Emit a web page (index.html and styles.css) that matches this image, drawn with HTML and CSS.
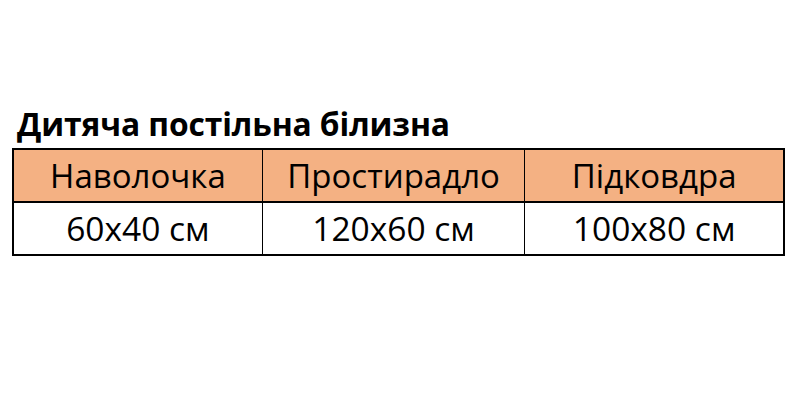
FILE: index.html
```html
<!DOCTYPE html>
<html lang="uk">
<head>
<meta charset="utf-8">
<title>Дитяча постільна білизна</title>
<link rel="stylesheet" href="styles.css">
</head>
<body>
<div class="page">
  <h1 class="title">Дитяча постільна білизна</h1>
  <table class="sizes">
    <colgroup>
      <col class="c1"><col class="c2"><col class="c3">
    </colgroup>
    <thead>
      <tr><th>Наволочка</th><th>Простирадло</th><th>Підковдра</th></tr>
    </thead>
    <tbody>
      <tr><td>60x40 см</td><td>120x60 см</td><td>100x80 см</td></tr>
    </tbody>
  </table>
</div>
</body>
</html>
```

FILE: styles.css
```css
html, body {
  margin: 0;
  padding: 0;
  background: #ffffff;
}
.page {
  padding: 104px 0 0 12px;
  font-family: "Open Sans", "Noto Sans", sans-serif;
  color: #000;
}
.title {
  margin: 0 0 4px 5px;
  font-size: 31.8px;
  font-weight: 700;
  line-height: 40px;
  letter-spacing: -0.1px;
}
.sizes {
  border-collapse: collapse;
  width: 773px;
  border: 2px solid #000;
}
.c1 { width: 250px; }
.c2 { width: 263px; }
.c3 { width: 260px; }
.sizes th, .sizes td {
  border-left: 1px solid #000;
  border-right: 1px solid #000;
  text-align: center;
  padding: 0;
  font-size: 33px;
  font-weight: 400;
  height: 51px;
  line-height: 51px;
}
.sizes th {
  background: #f4b183;
  border-bottom: 2px solid #000;
}
.sizes td {
  font-size: 33.5px;
}
```
